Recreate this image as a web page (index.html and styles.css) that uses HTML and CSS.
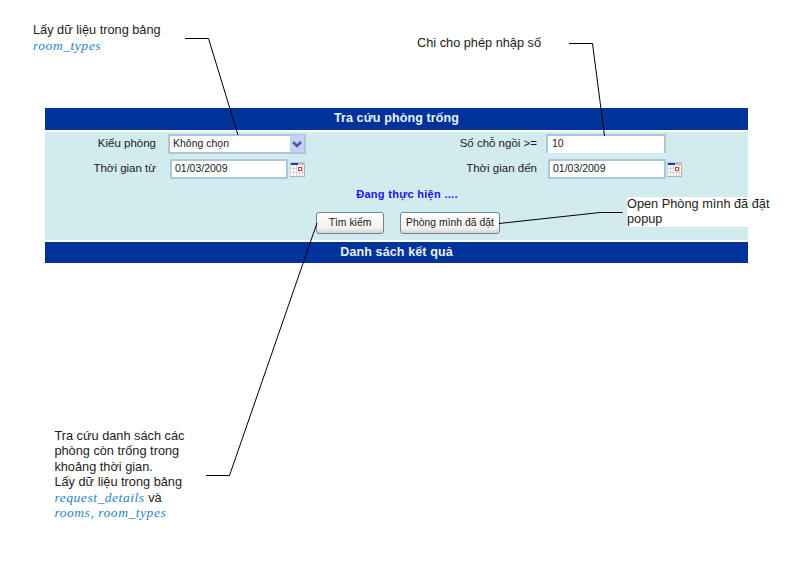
FILE: index.html
```html
<!DOCTYPE html>
<html lang="vi">
<head>
<meta charset="utf-8">
<title>Tra cứu phòng trống</title>
<link rel="stylesheet" href="styles.css">
</head>
<body>
<svg width="0" height="0" class="defs">
  <symbol id="calendar" viewBox="0 0 15 16">
    <rect width="15" height="15" fill="#c9c9cb"/>
    <rect y="1" width="14" height="13" fill="#fff"/>
    <rect width="14" height="3" fill="#b9bdc9"/>
    <rect x="1" y="1" width="7" height="2" fill="#2438b5"/>
    <path d="M.5 3v11M3.5 3v11M6.5 3v11M9.5 3v11M12.500 3v11M0 6.500h14M0 10.500h14" stroke="#d9d5d5"/>
    <rect x="8.5" y="5.500" width="3" height="3" fill="#fff" stroke="#c83f42"/>
    <path d="M0 14.500h15M14.500 3v12" stroke="#b5b1af"/>
  </symbol>
</svg>
<main class="panel">
  <h1 class="bar"><span class="title">Tra cứu phòng trống</span></h1>
  <form class="search">
    <div class="row">
      <label class="label first">Kiểu phòng</label>
      <div class="field select"><span>Không chọn</span>
        <svg class="arrow" width="14" height="17" viewBox="0 0 14 17"><rect width="14" height="17" rx="1" fill="#c3d2fb"/><path d="M3 7l4 4 4-4" fill="none" stroke="#4d6185" stroke-width="2.6"/></svg>
      </div>
      <label class="label second">Số chỗ ngồi &gt;=</label>
      <div class="field seats-input"><span>10</span></div>
    </div>
    <div class="row dates">
      <label class="label first">Thời gian từ</label>
      <div class="field date"><span>01/03/2009</span></div>
      <svg class="cal" width="15" height="16"><use href="#calendar"/></svg>
      <label class="label second">Thời gian đến</label>
      <div class="field date"><span>01/03/2009</span></div>
      <svg class="cal" width="15" height="16"><use href="#calendar"/></svg>
    </div>
    <p class="status">Đang thực hiện ....</p>
    <div class="actions">
      <button type="button" class="find">Tìm kiếm</button>
      <button type="button" class="mine">Phòng mình đã đặt</button>
    </div>
  </form>
  <h2 class="bar results"><span class="title">Danh sách kết quả</span></h2>
</main>

<p class="note note-types">Lấy dữ liệu trong bảng<br><em>room_types</em></p>
<p class="note note-number">Chi cho phép nhập số</p>
<p class="note note-popup">Open Phòng mình đã đặt<br>popup</p>
<p class="note note-search">Tra cứu danh sách các<br>phòng còn trống trong<br>khoảng thời gian.<br>Lấy dữ liệu trong bảng<br><em>request_details</em> và<br><em>rooms, room_types</em></p>
<svg class="connectors" width="810" height="572" viewBox="0 0 810 572">
  <path d="M185 38.5H208.5L238 135M569 43.5H592.5L604.500 136M622.500 212.500H600L499 223.500M206 475.500H229.500L317 223"/>
</svg>
</body>
</html>
```
FILE: styles.css
```css
* { box-sizing: border-box; }
body {
  margin: 0;
  height: 572px;
  position: relative;
  overflow: hidden;
  background: #fff;
  color: #1c1c1c;
  font-family: "Liberation Sans", Arial, sans-serif;
}
.defs { position: absolute; }
.panel { width: 703px; margin-left: 45px; padding-top: 108px; }
.bar {
  height: 22px;
  margin: 0;
  background: #003399;
  color: #e9f2fc;
  font-size: 12.5px;
  line-height: 21px;
  text-align: center;
  white-space: nowrap;
}
.bar .title { letter-spacing: 0.12px; }
.results { height: 21px; line-height: 20px; margin-top: 2px; }
.search { height: 108px; margin-top: 2px; padding-top: 2px; background: #d2ebef; }
.row { display: flex; height: 25px; }
.label {
  font-size: 11.5px;
  line-height: 19px;
  text-align: right;
  white-space: nowrap;
  flex: none;
}
.first { width: 111px; margin-right: 12px; }
.dates .first { margin-right: 14px; }
.second { width: 231px; margin-right: 9px; }
.dates .second { width: 232px; margin-right: 11px; }
.field {
  flex: none;
  height: 20px;
  border: 2px solid #adc6dc;
  border-radius: 1px;
  background: #fff;
  padding-left: 3px;
  font-size: 10.5px;
  line-height: 15px;
  white-space: nowrap;
}
.select { width: 138px; display: flex; justify-content: space-between; }
.arrow { flex: none; margin-top: -1px; }
.seats-input { width: 120px; height: 19px; border-bottom: 0; padding-left: 4px; line-height: 15px; }
.date { width: 118px; }
.cal { margin: 3px 0 0 2px; flex: none; }
.dates .cal:last-child { margin-left: 1px; }
.status {
  height: 29px;
  margin: 0;
  padding-left: 21px;
  color: #1c12f0;
  font-size: 11px;
  letter-spacing: 0.3px;
  font-weight: bold;
  line-height: 20px;
  text-align: center;
}
.actions { display: flex; gap: 16px; margin-left: 271px; margin-top: -1px; }
button {
  height: 22px;
  padding: 0 0 1px;
  border: 1.5px solid #6585a6;
  border-radius: 3px;
  background: linear-gradient(#fff, #f3f2ee 75%, #d8d3cb);
  color: #1c1c1c;
  font: 10.4px "Liberation Sans", Arial, sans-serif;
  white-space: nowrap;
}
.find { width: 68px; }
.mine { width: 100px; }
.note {
  position: absolute;
  margin: 0;
  font-size: 12.75px;
  line-height: 15.4px;
  white-space: nowrap;
}
.note em {
  font-family: "Liberation Serif", serif;
  font-size: 13.5px;
  letter-spacing: 0.55px;
  line-height: 0;
  color: #2585c5;
}
.note-types { left: 33px; top: 22.4px; }
.note-number { left: 417px; top: 35px; }
.note-popup { left: 627px; top: 197px; background: #fff; height: 30px; line-height: 14.8px; }
.note-search { left: 54.4px; top: 428px; }
.connectors { position: absolute; inset: 0; pointer-events: none; }
.connectors path { fill: none; stroke: #000; stroke-width: 1; }
```
